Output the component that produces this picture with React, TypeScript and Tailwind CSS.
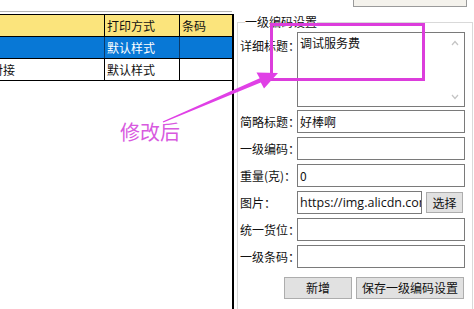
import React from "react";

const font = { fontFamily: '"Noto Sans CJK SC", "Noto Sans", sans-serif' };

function Row({ label, children }: { label: string; children: React.ReactNode }) {
  return (
    <div className="flex items-center h-[23px]">
      <div className="w-[57px] shrink-0 text-[12px] leading-[16px] text-[#111] whitespace-nowrap">{label}</div>
      {children}
    </div>
  );
}

function Input({ value = "", w = "w-[168px]" }: { value?: string; w?: string }) {
  return (
    <div
      className={`${w} h-[23px] border border-[#7a7a7a] bg-white text-[12px] leading-[21px] pl-[2px] overflow-hidden whitespace-nowrap text-[#111]`}
    >
      {value}
    </div>
  );
}

export default function App() {
  return (
    <div className="relative w-[474px] h-[309px] overflow-hidden bg-white flex items-start" style={font}>
      {/* Left table panel */}
      <div className="w-[234px] h-[309px] shrink-0 flex flex-col">
        <div className="h-[11px] shrink-0" />
        <div className="h-[1px] shrink-0 bg-[#b4b4b4] w-[232px]" />
        <div className="h-[2px] shrink-0" />
        <div className="flex-1 border-t border-r-2 border-black flex flex-col">
          <div className="flex h-[22px] bg-[#fbe47c] border-b border-black text-[12px] leading-[21px] text-[#111]">
            <div className="w-[105px] border-r border-black" />
            <div className="w-[75px] border-r border-black pl-[2px]">打印方式</div>
            <div className="flex-1 pl-[2px]">条码</div>
          </div>
          <div className="flex h-[22px] bg-[#0878d6] border-b border-black text-[12px] leading-[21px] text-white">
            <div className="w-[105px] border-r border-[#0a3a6a]" />
            <div className="w-[75px] border-r border-[#0a3a6a] pl-[2px]">默认样式</div>
            <div className="flex-1" />
          </div>
          <div className="flex h-[22px] bg-white border-b border-black text-[12px] leading-[21px] text-[#111]">
            <div className="w-[105px] border-r border-black overflow-hidden whitespace-nowrap">
              <span className="-ml-[9px]">对接</span>
            </div>
            <div className="w-[75px] border-r border-black pl-[2px]">默认样式</div>
            <div className="flex-1" />
          </div>
        </div>
      </div>

      {/* Right settings panel */}
      <div className="flex-1 flex flex-col">
        <div className="ml-[119px] w-[114px] h-[7px] shrink-0 border-x border-b border-[#9a9a9a] bg-[#f4f2ec]" />
        <fieldset className="ml-[3px] mr-[1px] mt-[8px] border border-[#d9d9d9] pl-[2px] pb-[20px]">
          <legend className="ml-[5px] text-[12px] leading-[14px] text-[#111]">一级编码设置</legend>
          <div className="flex flex-col mt-[3px]">
            <div className="flex items-start">
              <div className="w-[57px] shrink-0 text-[12px] leading-[16px] pt-[6px] text-[#111] whitespace-nowrap">详细标题：</div>
              <div className="relative w-[168px] h-[75px] border border-[#7a7a7a] bg-white text-[12px] leading-[16px] pl-[2px] pt-[2px] text-[#111]">
                调试服务费
                <svg className="absolute right-[5px] top-[7px]" width="8" height="6" viewBox="0 0 8 6">
                  <path d="M1 5 L4 1.5 L7 5" fill="none" stroke="#c4c4c4" strokeWidth="1.2" />
                </svg>
                <svg className="absolute right-[5px] bottom-[6px]" width="8" height="6" viewBox="0 0 8 6">
                  <path d="M1 1 L4 4.5 L7 1" fill="none" stroke="#c4c4c4" strokeWidth="1.2" />
                </svg>
              </div>
            </div>
            <div className="flex flex-col gap-[4px] mt-[3px]">
              <Row label="简略标题：">
                <Input value="好棒啊" />
              </Row>
              <Row label="一级编码：">
                <Input />
              </Row>
              <Row label="重量(克)：">
                <Input value="0" />
              </Row>
              <Row label="图片：">
                <div
                  className="w-[125px] h-[23px] border border-[#7a7a7a] bg-white text-[12.5px] leading-[21px] pl-[2px] overflow-hidden whitespace-nowrap text-[#111]"
                  style={{ fontFamily: '"Open Sans", "Noto Sans", sans-serif' }}
                >
                  https://img.alicdn.com
                </div>
                <button className="ml-[4px] w-[37px] h-[21px] border border-[#adadad] bg-[#e1e1e1] text-[12px] leading-[19px] text-[#111]">
                  选择
                </button>
              </Row>
              <Row label="统一货位：">
                <Input />
              </Row>
              <Row label="一级条码：">
                <Input />
              </Row>
            </div>
            <div className="flex mt-[9px] ml-[44px] gap-[4px]">
              <button className="w-[68px] h-[22px] border border-[#adadad] bg-[#e1e1e1] text-[12px] leading-[20px] text-[#111]">
                新增
              </button>
              <button className="w-[108px] h-[22px] border border-[#adadad] bg-[#e1e1e1] text-[12px] leading-[20px] text-[#111]">
                保存一级编码设置
              </button>
            </div>
          </div>
        </fieldset>
      </div>

      {/* Annotation overlay */}
      <svg className="absolute left-0 top-0 pointer-events-none" width="474" height="309" viewBox="0 0 474 309">
        <rect x="271.5" y="24.5" width="152" height="55" fill="none" stroke="#dc3ddc" strokeWidth="3" />
        <polygon
          points="163.3,122.6 260.8,82.4 264,88.5 278,73 256.5,72.5 259.7,78.3 162.7,121.4"
          fill="#e040e6"
        />
      </svg>
      <span className="absolute left-[120px] top-[119px] text-[20px] leading-[26px] text-[#d85adf] pointer-events-none">
        修改后
      </span>
    </div>
  );
}
